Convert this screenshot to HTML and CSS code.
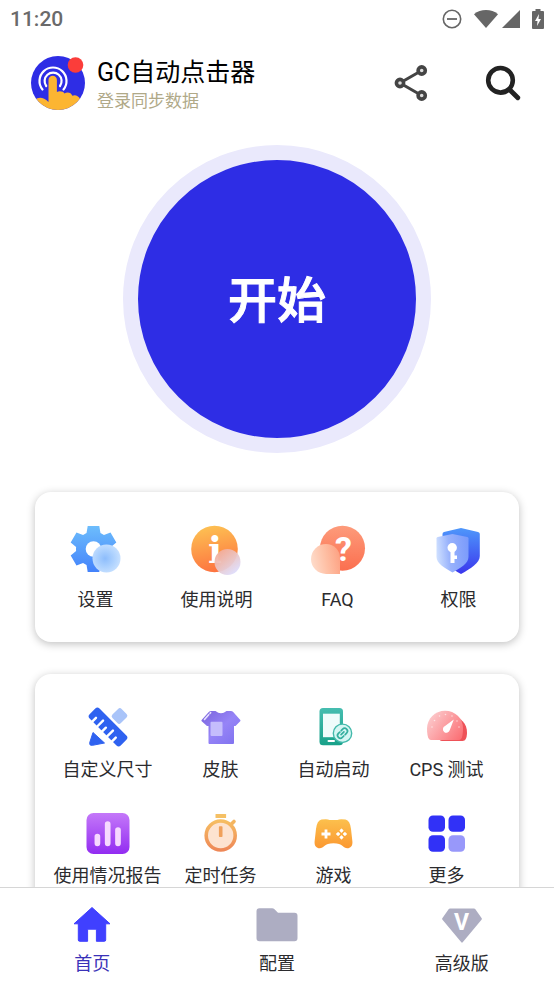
FILE: index.html
```html
<!DOCTYPE html>
<html lang="zh-CN">
<head>
    <meta charset="UTF-8">
    <meta name="viewport" content="width=device-width, initial-scale=1.0">
    <title>GC自动点击器</title>
    <link rel="stylesheet" href="styles.css">
</head>
<body>
    <div class="status-bar">
        <span class="clock">11:20</span>
        <div class="status-icons">
            <svg width="20" height="20" viewBox="0 0 20 20"><circle cx="10" cy="10" r="8.7" fill="none" stroke="#666" stroke-width="1.6"/><path d="M5 10h10" stroke="#666" stroke-width="1.8"/></svg>
            <div class="signal">
                <svg width="24" height="20" viewBox="0 0 24 20"><path d="M0 5.2C3.4 2.400 7.500 1 12 1s8.600 1.400 12 4.200L12 19z" fill="#666"/></svg>
                <svg width="18" height="20" viewBox="0 0 18 20"><path d="M18 1v18H0z" fill="#666"/></svg>
            </div>
            <svg width="12" height="20" viewBox="0 0 12 20"><path d="M3.500 0h5v2H11a1 1 0 0 1 1 1v16a1 1 0 0 1-1 1H1a1 1 0 0 1-1-1V3a1 1 0 0 1 1-1h2.500z" fill="#666"/><path d="M7 5L3 12h2.500L5 17l4-7H6.500z" fill="#fff"/></svg>
        </div>
    </div>

    <header class="header">
        <svg class="logo" width="54" height="54" viewBox="0 0 54 54">
            <clipPath id="logo-clip"><circle cx="27" cy="27" r="27"/></clipPath>
            <circle cx="27" cy="27" r="27" fill="#2e2de5"/>
            <g fill="none" stroke="#fff" stroke-width="2.200" stroke-linecap="round">
                <path d="M11.500 33.500A13.500 13.500 0 1 1 32.500 33.500"/>
                <path d="M15.200 30A8.500 8.500 0 1 1 29 30"/>
            </g>
            <path clip-path="url(#logo-clip)" d="M17.500 42V24a4.200 4.200 0 0 1 8.400 0v12c2-1.500 6.500-1 7.600 1.500 2.500-2 7-1 7.800 2.300 3-1.500 6 .2 7.700 3V54H4V44c3-3 8-3.500 13.500 2z" fill="#fcb532"/>
            <circle cx="44.500" cy="9" r="7.800" fill="#fb3d3a"/>
        </svg>
        <div class="account">
            <h1>GC自动点击器</h1>
            <a class="login" href="#login">登录同步数据</a>
        </div>
        <div class="actions">
            <button class="icon-btn" aria-label="分享">
                <svg width="44" height="44" viewBox="0 0 44 44"><g fill="none" stroke="#444"><path d="M32.700 9.500L11 22l21.700 12.500" stroke-width="3"/><g fill="#ddd" stroke-width="3.600"><circle cx="32.700" cy="9.500" r="3.600"/><circle cx="11" cy="22" r="3.600"/><circle cx="32.700" cy="34.500" r="3.600"/></g></g></svg>
            </button>
            <button class="icon-btn" aria-label="搜索">
                <svg width="44" height="44" viewBox="0 0 44 44"><circle cx="19.500" cy="19.300" r="12.300" fill="none" stroke="#222" stroke-width="4.600"/><path d="M28.500 28.500l8.300 8.300" stroke="#222" stroke-width="4.800" stroke-linecap="round"/></svg>
            </button>
        </div>
    </header>

    <main class="content">
        <div class="hero">
            <button class="start-btn">开始</button>
        </div>

        <section class="card card-main">
            <a class="item" href="#settings">
                <svg width="56" height="56" viewBox="0 0 56 56">
                    <defs>
                        <linearGradient id="gear" x1="0" y1="0" x2="0" y2="1"><stop offset="0" stop-color="#6dbdfc"/><stop offset="1" stop-color="#4382fb"/></linearGradient>
                        <radialGradient id="gear-glass" cx=".45" cy=".5" r=".55"><stop offset="0" stop-color="#8dbdfc"/><stop offset=".5" stop-color="#a9cffe"/><stop offset="1" stop-color="#c6e0ff"/></radialGradient>
                        <clipPath id="gear-shape">
                            <circle cx="25.500" cy="27" r="17.500"/>
                            <path d="M19.700 4h11.600l1.500 9h-14.600z"/>
                            <path d="M19.700 4h11.600l1.500 9h-14.600z" transform="rotate(60 25.500 27)"/>
                            <path d="M19.700 4h11.600l1.500 9h-14.600z" transform="rotate(120 25.500 27)"/>
                            <path d="M19.700 4h11.600l1.500 9h-14.600z" transform="rotate(180 25.500 27)"/>
                            <path d="M19.700 4h11.600l1.500 9h-14.600z" transform="rotate(240 25.500 27)"/>
                            <path d="M19.700 4h11.600l1.500 9h-14.600z" transform="rotate(300 25.500 27)"/>
                        </clipPath>
                    </defs>
                    <rect x="2" y="4" width="48" height="46" fill="url(#gear)" clip-path="url(#gear-shape)"/>
                    <circle cx="25.500" cy="27" r="7.800" fill="#fff"/>
                    <circle cx="38.500" cy="36.500" r="14" fill="url(#gear-glass)"/>
                </svg>
                <span>设置</span>
            </a>
            <a class="item" href="#guide">
                <svg width="56" height="56" viewBox="0 0 56 56">
                    <defs>
                        <linearGradient id="info" x1=".4" y1="0" x2=".6" y2="1"><stop offset="0" stop-color="#fdc052"/><stop offset="1" stop-color="#fd7240"/></linearGradient>
                        <linearGradient id="info-glass" x1=".2" y1=".1" x2=".8" y2=".9"><stop offset="0" stop-color="#f3ae9c"/><stop offset=".5" stop-color="#e9c7c9"/><stop offset="1" stop-color="#dedcfb"/></linearGradient>
                    </defs>
                    <circle cx="25.500" cy="27" r="23.300" fill="url(#info)"/>
                    <text class="glyph-info" x="26" y="41" text-anchor="middle">i</text>
                    <circle cx="38.500" cy="40" r="13" fill="url(#info-glass)" opacity=".94"/>
                </svg>
                <span>使用说明</span>
            </a>
            <a class="item" href="#faq">
                <svg width="56" height="56" viewBox="0 0 56 56">
                    <defs>
                        <linearGradient id="faq" x1="0" y1="0" x2="0" y2="1"><stop offset="0" stop-color="#fd9b7b"/><stop offset="1" stop-color="#fb6f4f"/></linearGradient>
                        <linearGradient id="faq-glass" x1="0" y1=".6" x2="1" y2=".4"><stop offset="0" stop-color="#fedccb"/><stop offset=".5" stop-color="#fec0a5"/><stop offset="1" stop-color="#fda283"/></linearGradient>
                    </defs>
                    <circle cx="32.500" cy="26.200" r="22.500" fill="url(#faq)"/>
                    <text class="glyph-faq" x="33.500" y="39" text-anchor="middle">?</text>
                    <path d="M16 22a14 14 0 0 1 14 14v16H16a15 15 0 0 1 0-30z" fill="url(#faq-glass)"/>
                </svg>
                <span>FAQ</span>
            </a>
            <a class="item" href="#permissions">
                <svg width="56" height="56" viewBox="0 0 56 56">
                    <defs>
                        <linearGradient id="shield" x1="0" y1="0" x2="0" y2="1"><stop offset="0" stop-color="#4e97fb"/><stop offset="1" stop-color="#3b37ed"/></linearGradient>
                        <linearGradient id="shield-glass" x1="0" y1=".5" x2="1" y2=".4"><stop offset="0" stop-color="#cfe0ff"/><stop offset=".4" stop-color="#98b2fc"/><stop offset="1" stop-color="#7b9bfb"/></linearGradient>
                    </defs>
                    <path d="M30 6l17 4q1.800.5 1.800 2v22c0 7-9 12.500-18.800 18-9.800-5.500-18.500-11-18.500-18V12q0-1.500 1.500-2z" fill="url(#shield)"/>
                    <path d="M21.500 12l14.800 3q1.200.3 1.200 1.500V35c0 6.500-8 11-16 15.500-8-4.500-16-9-16-15.500V16.500q0-1.200 1.200-1.500z" fill="url(#shield-glass)"/>
                    <circle cx="21.200" cy="25.700" r="4.700" fill="#fff"/>
                    <path d="M19.500 28h4v5.500h2.500v3.500h-2.500V41h-4z" fill="#fff"/>
                </svg>
                <span>权限</span>
            </a>
        </section>

        <section class="card card-tools">
            <a class="item" href="#size">
                <svg width="44" height="44" viewBox="0 0 44 44">
                    <rect x="27.500" y="4.500" width="12" height="13" rx="2.500" transform="rotate(45 33.500 11)" fill="#a9c4f9"/>
                    <path d="M7 27.500l11.500 10.500-12 2.300q-3.300.6-2.800-2.600z" fill="#2f62f0" stroke="#2f62f0" stroke-linejoin="round"/>
                    <g transform="rotate(45 22 22)">
                        <rect x="0" y="15" width="44" height="14" rx="3" fill="#2f62f0"/>
                        <path d="M7 30v-6M14 30v-9M21 30v-6M28 30v-9M35 30v-6" stroke="#fff" stroke-width="2.400" stroke-linecap="round"/>
                    </g>
                </svg>
                <span>自定义尺寸</span>
            </a>
            <a class="item" href="#skin">
                <svg width="44" height="44" viewBox="0 0 44 44">
                    <linearGradient id="shirt" x1="0" y1="0" x2="1" y2="1"><stop offset="0" stop-color="#7a63db"/><stop offset=".5" stop-color="#9684f7"/><stop offset="1" stop-color="#7d70ee"/></linearGradient>
                    <path d="M12 6h4.500q5.500 4.500 11 0H32q1 0 2 .8l7.300 8.200q.4.600-.1 1.200L36.500 21H35v17q0 1-1 1H10.500q-1 0-1-1V21H8l-5.300-4.800q-.6-.6-.1-1.200L10 6.800q1-.8 2-.8z" fill="url(#shirt)"/>
                    <rect x="11.500" y="16.700" width="12" height="14.300" rx="1" fill="#c5bdfc"/>
                    <path d="M5.500 14.500l4.200-4.800M11 8.300l.7-.6" stroke="#e8e2ff" stroke-width="1.600" stroke-linecap="round"/>
                </svg>
                <span>皮肤</span>
            </a>
            <a class="item" href="#autostart">
                <svg width="44" height="44" viewBox="0 0 44 44">
                    <linearGradient id="phone" x1="0" y1="0" x2="0" y2="1"><stop offset="0" stop-color="#46bdb0"/><stop offset="1" stop-color="#18a189"/></linearGradient>
                    <rect x="7.500" y="3" width="23.500" height="37.300" rx="3.500" fill="url(#phone)"/>
                    <rect x="11" y="8.700" width="16.800" height="23.500" fill="#effcfb"/>
                    <rect x="15.500" y="35" width="7.500" height="2" rx="1" fill="#fff"/>
                    <circle cx="30.500" cy="28.300" r="9.200" fill="#d5f6f3" stroke="#43b9ab" stroke-width="1.400"/>
                    <g transform="rotate(-45 30.500 28.300)" fill="none" stroke="#35af9f" stroke-width="1.700" stroke-linecap="round">
                        <path d="M29.500 25.500h-2a2.800 2.800 0 0 0 0 5.600h2M31.500 25.500h2a2.800 2.800 0 0 1 0 5.600h-2M28.500 28.300h4"/>
                    </g>
                </svg>
                <span>自动启动</span>
            </a>
            <a class="item" href="#cps">
                <svg width="44" height="44" viewBox="0 0 44 44">
                    <linearGradient id="gauge" x1="0" y1=".2" x2="1" y2=".8"><stop offset="0" stop-color="#fccdcf"/><stop offset="1" stop-color="#fb7277"/></linearGradient>
                    <path d="M27 12c9 0 15 6.500 15 15.500 0 5-1.500 8.500-4.500 8.500H17q-3 0-3-4z" fill="#ee5258"/>
                    <path d="M20 5.700c10 0 18 7.500 18 17.300 0 5-.5 9-2 11q-.8.900-2 .9H6q-1.200 0-2-.9C2.500 32 2 28 2 23.500 2 13.700 10 5.700 20 5.700z" fill="url(#gauge)"/>
                    <path d="M28.800 14.500l-4 10.500a3.500 3.500 0 1 1-4.800-4z" fill="#fff"/>
                    <g fill="#fff" opacity=".6"><circle cx="7" cy="22" r=".8"/><circle cx="9.500" cy="15.500" r=".8"/><circle cx="14.500" cy="11" r=".8"/><circle cx="20.500" cy="9.500" r=".8"/><circle cx="27" cy="11" r=".8"/><circle cx="32" cy="16" r=".8"/><circle cx="34" cy="22" r=".8"/></g>
                </svg>
                <span>CPS 测试</span>
            </a>
            <a class="item" href="#report">
                <svg width="44" height="44" viewBox="0 0 44 44">
                    <linearGradient id="report" x1="0" y1="0" x2="0" y2="1"><stop offset="0" stop-color="#c478f9"/><stop offset="1" stop-color="#922cf1"/></linearGradient>
                    <rect x=".5" y="2" width="43" height="41" rx="7" fill="url(#report)"/>
                    <path d="M11.400 25.500v6.800M21.700 13v19.300M32 19v13.300" stroke="#f6d8ff" stroke-width="5.700" stroke-linecap="round"/>
                </svg>
                <span>使用情况报告</span>
            </a>
            <a class="item" href="#timer">
                <svg width="44" height="44" viewBox="0 0 44 44">
                    <linearGradient id="timer" x1="0" y1="0" x2="0" y2="1"><stop offset="0" stop-color="#f6bd62"/><stop offset="1" stop-color="#ee8857"/></linearGradient>
                    <rect x="16.500" y="3" width="10.600" height="4" rx=".5" fill="#f5c064"/>
                    <path d="M32 13.500l3-3" stroke="#f4b45f" stroke-width="3.600" stroke-linecap="round"/>
                    <circle cx="21.700" cy="24.500" r="14.500" fill="#fde3d0" stroke="url(#timer)" stroke-width="3.600"/>
                    <rect x="19.900" y="15.300" width="3.600" height="10.700" rx=".8" fill="#f0a05a"/>
                </svg>
                <span>定时任务</span>
            </a>
            <a class="item" href="#games">
                <svg width="44" height="44" viewBox="0 0 44 44">
                    <linearGradient id="pad" x1="0" y1="0" x2="0" y2="1"><stop offset="0" stop-color="#fcc04d"/><stop offset="1" stop-color="#fb9831"/></linearGradient>
                    <path d="M9.500 8.600q6-.9 8 .4h8q2-1.300 8-.4 4.500.9 5.500 9.400l1.400 12.500c.4 4.500-2 6.800-5 6.800-4.500 0-4.400-5-13.900-5s-9.400 5-13.900 5c-3 0-5.400-2.300-5-6.800L4 18Q5 9.500 9.500 8.600z" fill="url(#pad)"/>
                    <path d="M14 18.500v9M9.500 23h9" stroke="#fff" stroke-width="2.800"/>
                    <g fill="#fff"><rect x="27.900" y="18" width="3.200" height="3.200" rx=".6" transform="rotate(45 29.500 19.600)"/><rect x="27.900" y="24.800" width="3.200" height="3.200" rx=".6" transform="rotate(45 29.500 26.400)"/><rect x="24.500" y="21.400" width="3.200" height="3.200" rx=".6" transform="rotate(45 26.100 23)"/><rect x="31.300" y="21.400" width="3.200" height="3.200" rx=".6" transform="rotate(45 32.900 23)"/></g>
                </svg>
                <span>游戏</span>
            </a>
            <a class="item" href="#more">
                <svg width="44" height="44" viewBox="0 0 44 44" fill="#3131f7">
                    <rect x="3.500" y="4.500" width="16.500" height="16.300" rx="4.500"/>
                    <rect x="23.500" y="4.500" width="16.500" height="16.300" rx="4.500"/>
                    <rect x="3.500" y="24.300" width="16.500" height="16.500" rx="4.500"/>
                    <rect x="23.500" y="24.300" width="16.500" height="16.500" rx="4.500" fill="#9898fa"/>
                </svg>
                <span>更多</span>
            </a>
        </section>
    </main>

    <nav class="tab-bar">
        <a class="tab active" href="#home">
            <svg width="44" height="44" viewBox="0 0 44 44"><path d="M22 4.500L40 20.800H35.700V37q0 1.300-1.300 1.300h-8V26.200h-8.800v12.100h-8q-1.300 0-1.300-1.300V20.800H4z" fill="#4040ff" stroke="#4040ff" stroke-linejoin="round"/></svg>
            <span>首页</span>
        </a>
        <a class="tab" href="#config">
            <svg width="44" height="44" viewBox="0 0 44 44"><path d="M4.500 5.300H17q1.500 0 2.500 1l3.500 3.400h16.500q3 0 3 3v22.600q0 3-3 3h-35q-3 0-3-3v-27q0-3 3-3z" fill="#adadc2"/></svg>
            <span>配置</span>
        </a>
        <a class="tab" href="#premium">
            <svg width="44" height="44" viewBox="0 0 44 44"><path d="M10 5.500h24q.8 0 1.200.6l6.500 9.200q.4.600 0 1.200L22.700 39.300q-.7.800-1.400 0L2.300 16.500q-.4-.6 0-1.200l6.500-9.200q.4-.6 1.200-.6z" fill="#adadc2"/><text class="glyph-vip" x="21.500" y="27" text-anchor="middle">V</text></svg>
            <span>高级版</span>
        </a>
    </nav>
</body>
</html>
```

FILE: styles.css
```css
* {
    box-sizing: border-box;
}
body {
    font-family: Roboto, "Noto Sans CJK SC", sans-serif;
    background-color: #fff;
    color: #2b2b2e;
    margin: 0;
    height: 100vh;
    display: flex;
    flex-direction: column;
    overflow: hidden;
}
a {
    color: inherit;
    text-decoration: none;
}
button {
    font-family: inherit;
    padding: 0;
    cursor: pointer;
}
svg {
    display: block;
    flex-shrink: 0;
}

/* status bar */
.status-bar {
    display: flex;
    justify-content: space-between;
    align-items: center;
    height: 38px;
    padding: 0 10px;
    flex-shrink: 0;
}
.clock {
    font-size: 21px;
    font-weight: 500;
    color: #6a6a6a;
}
.status-icons {
    display: flex;
    align-items: center;
    gap: 12px;
}
.signal {
    display: flex;
    gap: 4px;
}

/* header */
.header {
    display: flex;
    align-items: center;
    gap: 12px;
    height: 90px;
    padding: 0 29px 0 31px;
    flex-shrink: 0;
}
.account {
    flex: 1;
    padding-top: 4px;
}
h1 {
    margin: 0;
    font-size: 25px;
    font-weight: 400;
    line-height: 32px;
    color: #000;
}
.login {
    display: block;
    font-size: 17px;
    line-height: 24px;
    color: #b0a988;
}
.actions {
    display: flex;
    gap: 48px;
}
.icon-btn {
    border: none;
    background: none;
}

/* scrolling area */
.content {
    flex: 1;
    min-height: 0;
    overflow-y: auto;
    scrollbar-width: none;
}
.hero {
    display: flex;
    justify-content: center;
    padding: 17px 0 39px;
}
.start-btn {
    width: 308px;
    height: 308px;
    padding-bottom: 6px;
    border: 15px solid #eae9fc;
    border-radius: 50%;
    background-color: #2e2de5;
    color: #fff;
    font-size: 49px;
    font-weight: 500;
    -webkit-text-stroke: 1px #fff;
}

/* cards */
.card {
    display: grid;
    grid-template-columns: repeat(4, 1fr);
    margin: 0 35px 32px;
    border-radius: 16px;
    background-color: #fff;
    box-shadow: 0 2px 8px rgba(0, 0, 0, 0.25);
}
.card-main {
    padding: 30px 0;
}
.card-main .item {
    gap: 10px;
}
.card-tools {
    padding: 31px 16px;
    row-gap: 29px;
}
.item {
    display: flex;
    flex-direction: column;
    align-items: center;
    gap: 9px;
    font-size: 18px;
    line-height: 24px;
    white-space: nowrap;
}

/* bottom tabs */
.tab-bar {
    display: grid;
    grid-template-columns: repeat(3, 1fr);
    padding: 15px 0 9px;
    border-top: 1px solid #d6d6d6;
    background-color: #fff;
    flex-shrink: 0;
}
.tab {
    display: flex;
    flex-direction: column;
    align-items: center;
    gap: 5px;
    font-size: 18px;
    line-height: 24px;
}
.tab.active {
    color: #3a32b8;
}

/* characters inside icons */
.glyph-info {
    font: bold 37px "DejaVu Serif", serif;
    fill: #fff;
}
.glyph-faq {
    font: bold 34px Roboto, sans-serif;
    fill: #fff;
}
.glyph-vip {
    font: bold 23px Roboto, sans-serif;
    fill: #fff;
}
```
